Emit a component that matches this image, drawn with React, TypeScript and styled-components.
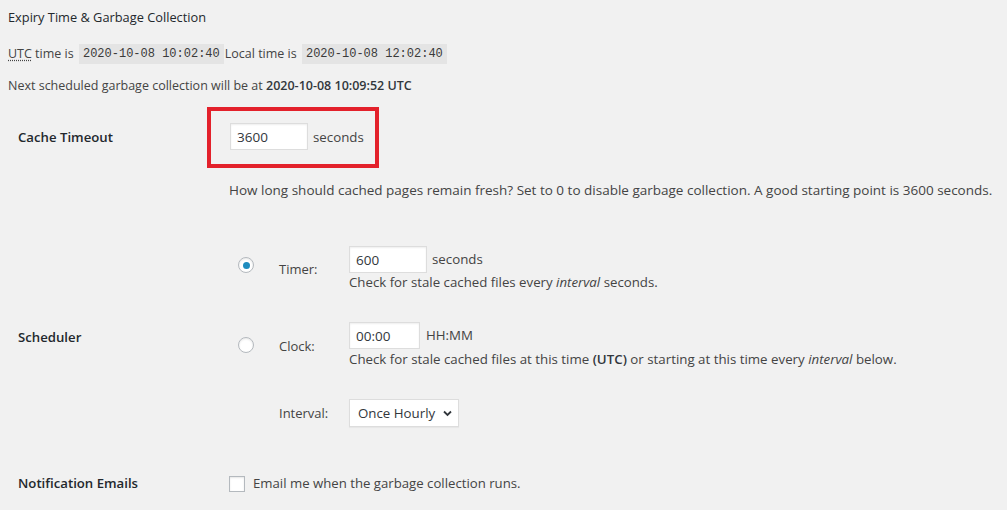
import React from "react";
import styled, { createGlobalStyle } from "styled-components";

const Global = createGlobalStyle`
  html, body { margin: 0; padding: 0; background: #f1f1f1; }
  body { font-family: "Open Sans", "Noto Sans", sans-serif; color: #444; font-size: 13px; }
  * { box-sizing: border-box; }
`;

const Page = styled.div`
  width: 1007px;
  height: 510px;
  overflow: hidden;
  padding: 7px 0 0 8px;
`;

const Heading = styled.h3`
  margin: 0;
  font-size: 12.8px;
  line-height: 20px;
  font-weight: 500;
  color: #23282d;
`;

const Para = styled.p<{ $top: number }>`
  margin: ${(p) => p.$top}px 0 0;
  font-size: 12.5px;
  line-height: 20px;
  display: flex;
  align-items: center;
  white-space: pre;
`;

const Abbr = styled.abbr`
  text-decoration: underline dotted;
  text-underline-offset: 2px;
`;

const Code = styled.code`
  font-family: "Liberation Mono", monospace;
  font-size: 12px;
  line-height: 20px;
  background: #e4e4e4;
  padding: 0 4px;
  margin: 0 1px 0 2px;
  color: #3a3a3a;
`;

const Strong = styled.strong`
  font-weight: 600;
  color: #32373c;
`;

const FormRow = styled.div<{ $top: number; $center?: boolean }>`
  display: flex;
  align-items: ${(p) => (p.$center ? "center" : "flex-start")};
  margin-top: ${(p) => p.$top}px;
  padding-left: 10px;
`;

const Th = styled.div<{ $pad?: number }>`
  width: 211px;
  flex: none;
  font-size: 13.2px;
  font-weight: 600;
  color: #23282d;
  line-height: 20px;
  padding-top: ${(p) => p.$pad ?? 0}px;
`;

const Td = styled.div`
  flex: 1;
  font-size: 13.5px;
  line-height: 20px;
`;

const Highlight = styled.div`
  display: inline-flex;
  align-items: center;
  gap: 5px;
  margin-left: -22px;
  border: 4px solid #e3212b;
  padding: 12px 11px 14px 19px;
`;

const TextInput = styled.input<{ $w: number }>`
  width: ${(p) => p.$w}px;
  height: 27px;
  border: 1px solid #ddd;
  background: #fff;
  box-shadow: inset 0 1px 2px rgba(0, 0, 0, 0.07);
  padding: 0 6px;
  font-family: inherit;
  font-size: 13.5px;
  color: #32373c;
  outline: none;
`;

const Suffix = styled.span`
  font-size: 13.3px;
  color: #444;
`;

const Description = styled.p<{ $top?: number; $size?: number }>`
  margin: ${(p) => p.$top ?? 0}px 0 0;
  font-size: ${(p) => p.$size ?? 13.5}px;
  line-height: 20px;
  color: #444;
  white-space: nowrap;
`;

const SchedGrid = styled.div`
  display: grid;
  grid-template-columns: 50px 70px auto;
  row-gap: 30px;
  align-items: center;
`;

const Radio = styled.span<{ $checked?: boolean; $lift: number }>`
  width: 16px;
  height: 16px;
  margin-left: 9px;
  margin-bottom: ${(p) => p.$lift}px;
  border-radius: 50%;
  border: 1px solid #b4b9be;
  background: #fff;
  box-shadow: inset 0 1px 2px rgba(0, 0, 0, 0.1);
  display: flex;
  align-items: center;
  justify-content: center;
  &::after {
    content: "";
    display: ${(p) => (p.$checked ? "block" : "none")};
    width: 7px;
    height: 7px;
    border-radius: 50%;
    background: #1e8cbe;
  }
`;

const SubLabel = styled.span`
  font-size: 13px;
  line-height: 20px;
  color: #444;
`;

const Field = styled.div`
  display: flex;
  flex-direction: column;
`;

const InputLine = styled.div<{ $gap: number; $h: number }>`
  display: flex;
  align-items: flex-start;
  gap: ${(p) => p.$gap}px;
  height: ${(p) => p.$h}px;
  line-height: 26px;
`;

const SelectBox = styled.div`
  position: relative;
  width: 110px;
  height: 28px;
`;

const Select = styled.select`
  appearance: none;
  display: block;
  width: 110px;
  height: 28px;
  border: 1px solid #ddd;
  background: #fff;
  box-shadow: 0 1px 1px rgba(0, 0, 0, 0.04);
  padding: 0 0 0 8px;
  font-family: inherit;
  font-size: 13.3px;
  color: #32373c;
  outline: none;
`;

const Chevron = styled.svg`
  position: absolute;
  right: 7px;
  top: 11px;
  pointer-events: none;
`;

const CheckLine = styled.label`
  display: flex;
  align-items: center;
  gap: 8px;
  font-size: 13.2px;
  line-height: 20px;
`;

const Checkbox = styled.span`
  width: 16px;
  height: 16px;
  border: 1px solid #b4b9be;
  background: #fff;
  box-shadow: inset 0 1px 2px rgba(0, 0, 0, 0.1);
  margin-top: 1px;
`;

const Em = styled.em`
  font-style: italic;
`;

export default function App() {
  return (
    <Page>
      <Global />
      <Heading>Expiry Time &amp; Garbage Collection</Heading>
      <Para $top={17}>
        <Abbr title="Coordinated Universal Time">UTC</Abbr>
        {" time is "}
        <Code>2020-10-08 10:02:40</Code>
        {"Local time is "}
        <Code>2020-10-08 12:02:40</Code>
      </Para>
      <Para $top={12}>
        {"Next scheduled garbage collection will be at "}
        <Strong>2020-10-08 10:09:52 UTC</Strong>
      </Para>

      <FormRow $top={11}>
        <Th $pad={20}>Cache Timeout</Th>
        <Td>
          <Highlight>
            <TextInput $w={78} defaultValue="3600" />
            <Suffix>seconds</Suffix>
          </Highlight>
          <Description $top={12}>
            How long should cached pages remain fresh? Set to 0 to disable garbage collection. A good starting point is 3600 seconds.
          </Description>
        </Td>
      </FormRow>

      <FormRow $top={46} $center>
        <Th>Scheduler</Th>
        <Td>
          <SchedGrid>
            <Radio $checked $lift={8} />
            <SubLabel>Timer:</SubLabel>
            <Field>
              <InputLine $gap={5} $h={26}>
                <TextInput $w={78} defaultValue="600" />
                <Suffix>seconds</Suffix>
              </InputLine>
              <Description $size={13.25}>
                Check for stale cached files every <Em>interval</Em> seconds.
              </Description>
            </Field>

            <Radio $lift={2} />
            <SubLabel>Clock:</SubLabel>
            <Field>
              <InputLine $gap={6} $h={27}>
                <TextInput $w={71} defaultValue="00:00" />
                <Suffix>HH:MM</Suffix>
              </InputLine>
              <Description $size={13.3}>
                Check for stale cached files at this time <Strong>(UTC)</Strong> or starting at this time every <Em>interval</Em> below.
              </Description>
            </Field>

            <span />
            <SubLabel>Interval:</SubLabel>
            <SelectBox>
              <Select defaultValue="hourly">
                <option value="hourly">Once Hourly</option>
                <option value="twicedaily">Twice Daily</option>
                <option value="daily">Once Daily</option>
              </Select>
              <Chevron width="9" height="7" viewBox="0 0 9 7">
                <path d="M1 1.5 L4.5 5 L8 1.5" fill="none" stroke="#32373c" strokeWidth="1.8" />
              </Chevron>
            </SelectBox>
          </SchedGrid>
        </Td>
      </FormRow>

      <FormRow $top={46} $center>
        <Th>Notification Emails</Th>
        <Td>
          <CheckLine>
            <Checkbox />
            Email me when the garbage collection runs.
          </CheckLine>
        </Td>
      </FormRow>
    </Page>
  );
}
